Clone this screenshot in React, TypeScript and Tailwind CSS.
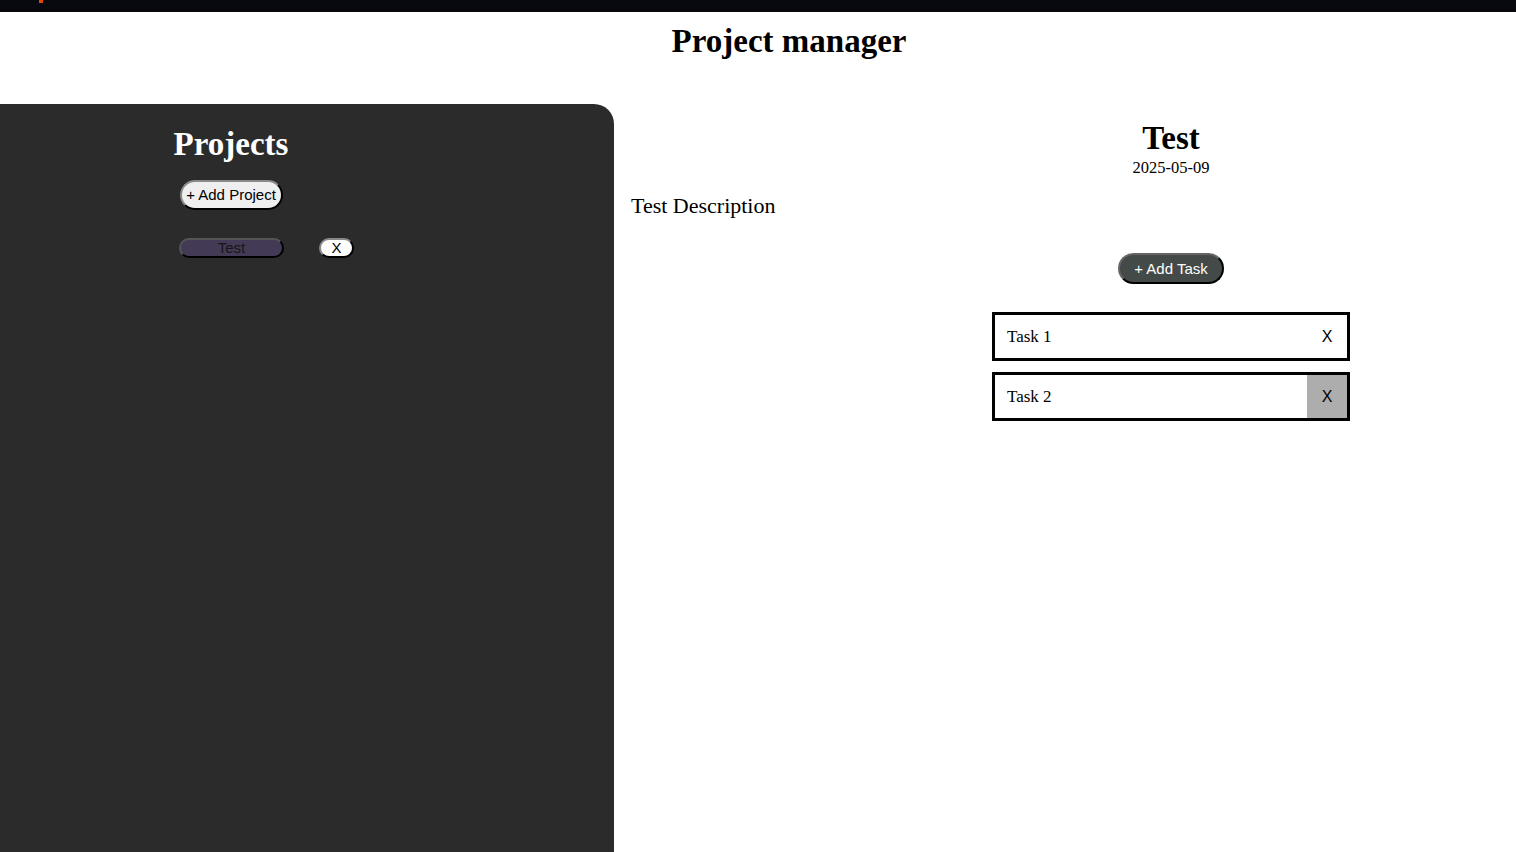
export default function App() {
    const tasks = [
        { id: 1, name: 'Task 1', hover: false },
        { id: 2, name: 'Task 2', hover: true },
    ];

    return <div className="min-h-screen flex flex-col bg-white font-['Liberation_Serif',serif] text-black overflow-hidden">
        <div className="h-[12px] bg-[#08090e] relative">
            <span className="absolute left-[39px] top-0 w-[4px] h-[3px] bg-[#e8450a]" />
        </div>

        <header className="h-[92px] pl-[62px] pt-[10px]">
            <h1 className="text-[33px] leading-[38px] font-bold text-center">Project manager</h1>
        </header>

        <div className="flex flex-1">
            <aside className="w-[614px] h-[748px] bg-[#2b2b2b] rounded-tr-[20px] shrink-0">
                <div className="w-[462px] flex flex-col items-center pt-[22px]">
                    <h2 className="text-[33px] leading-[37px] font-bold text-white">Projects</h2>
                    <button className="mt-[17px] h-[30px] w-[103px] rounded-full bg-[#efefef] border-2 border-[#8a8a8a] border-r-black border-b-black font-['Liberation_Sans',sans-serif] text-[15px] text-black leading-none pb-[1px]">+ Add Project</button>
                    <div className="self-start ml-[179px] mt-[28px] flex items-center gap-[35px]">
                        <button className="h-[20px] w-[105px] rounded-full bg-[#433b55] border-2 border-[#555] border-r-black border-b-black font-['Liberation_Sans',sans-serif] text-[15px] text-[#161616] leading-none pb-[2px]">Test</button>
                        <button className="h-[20px] w-[35px] rounded-full bg-white border-2 border-[#888] border-r-black border-b-black font-['Liberation_Sans',sans-serif] text-[15px] text-black leading-none pb-[2px]">X</button>
                    </div>
                </div>
            </aside>

            <main className="flex-1 flex flex-col pl-[17px]">
                <div className="w-[690px] self-end flex flex-col items-center pt-[16px]">
                    <h2 className="text-[33px] leading-[37px] font-bold">Test</h2>
                    <p className="text-[16.5px] leading-[18px] mt-[2px]">2025-05-09</p>
                </div>
                <p className="text-[22px] leading-[24px] mt-[17px]">Test Description</p>
                <div className="w-[690px] self-end flex flex-col items-center">
                    <button className="mt-[35px] h-[31px] w-[106px] rounded-full bg-[#444a48] border-2 border-[#666] border-r-black border-b-black font-['Liberation_Sans',sans-serif] text-[15px] text-white leading-none">+ Add Task</button>
                    <ul className="mt-[28px] flex flex-col gap-[11px]">
                        {tasks.map(t => (
                            <li key={t.id} className="w-[358px] h-[49px] border-[3px] border-black flex items-stretch">
                                <span className="flex-1 flex items-center pl-[12px] text-[17px]">{t.name}</span>
                                <button className={`w-[40px] flex items-center justify-center font-['Liberation_Sans',sans-serif] text-[16px] ${t.hover ? 'bg-[#adadad]' : 'bg-white'}`}>X</button>
                            </li>
                        ))}
                    </ul>
                </div>
            </main>
        </div>
    </div>;
}
